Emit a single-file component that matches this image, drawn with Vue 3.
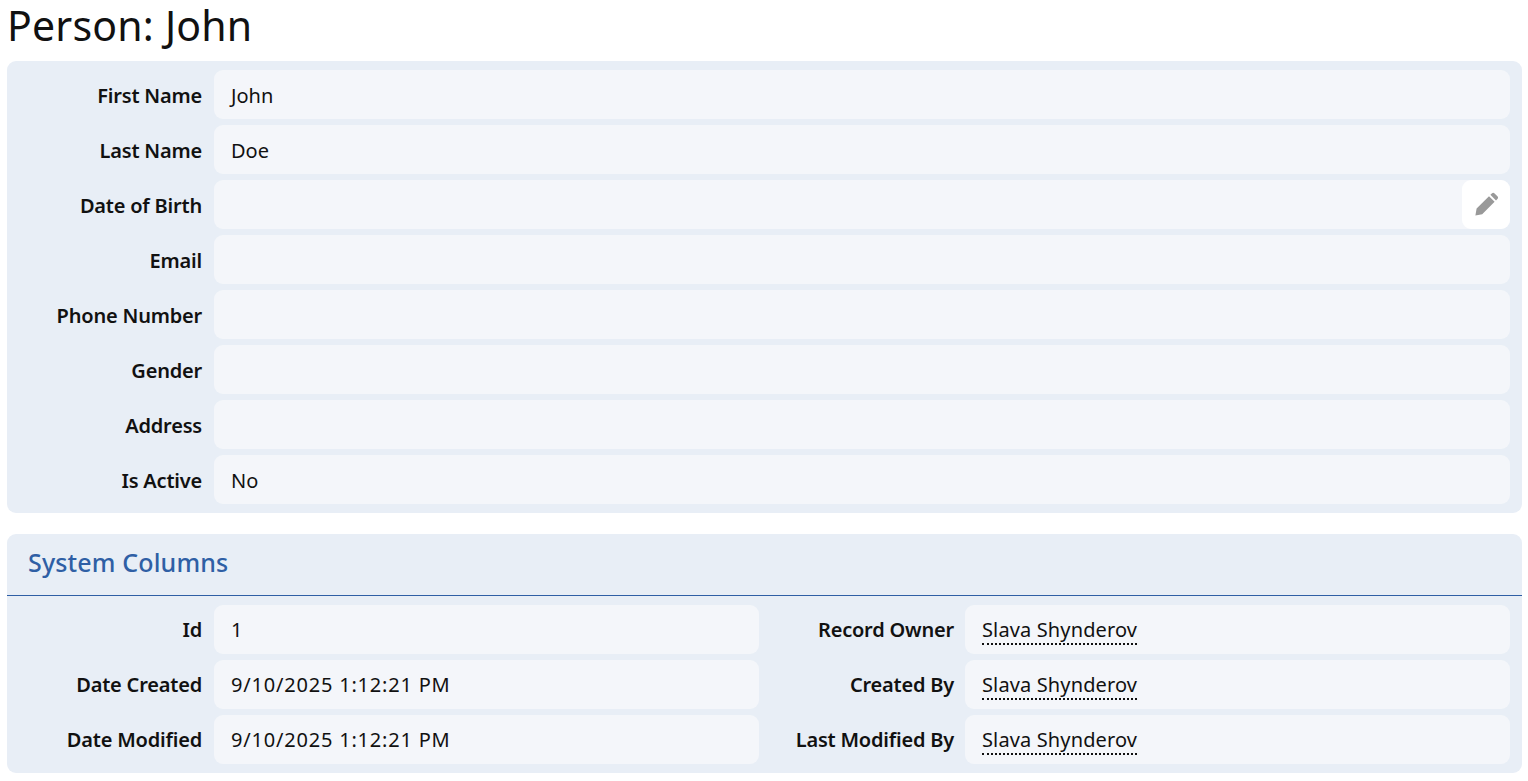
<script setup>
const mainRows = [
  { label: 'First Name', value: 'John' },
  { label: 'Last Name', value: 'Doe' },
  { label: 'Date of Birth', value: '', edit: true },
  { label: 'Email', value: '' },
  { label: 'Phone Number', value: '' },
  { label: 'Gender', value: '' },
  { label: 'Address', value: '' },
  { label: 'Is Active', value: 'No' },
]
const systemRows = [
  { label: 'Id', value: '1', owner: 'Record Owner' },
  { label: 'Date Created', value: '9/10/2025 1:12:21 PM', owner: 'Created By' },
  { label: 'Date Modified', value: '9/10/2025 1:12:21 PM', owner: 'Last Modified By' },
]
</script>

<template>
  <div class="page">
    <h1 class="title">Person: John</h1>
    <section class="panel main">
      <div v-for="row in mainRows" :key="row.label" class="row">
        <div class="label">{{ row.label }}</div>
        <div class="value">
          <span>{{ row.value }}</span>
          <button v-if="row.edit" class="edit" type="button" aria-label="Edit">
            <svg width="24" height="24" viewBox="0 0 24 24">
              <path fill="#999" d="M1.4 23.4l1.2-6.8L15 4.2l5.6 5.6L8.2 22.2zM16.4 2.8l1.4-1.4a2 2 0 0 1 2.8 0l2.8 2.8a2 2 0 0 1 0 2.8L22 8.4z"/>
            </svg>
          </button>
        </div>
      </div>
    </section>
    <section class="panel system">
      <h2 class="heading">System Columns</h2>
      <div class="sys-grid">
        <template v-for="row in systemRows" :key="row.label">
          <div class="label">{{ row.label }}</div>
          <div class="value"><span class="num">{{ row.value }}</span></div>
          <div class="label">{{ row.owner }}</div>
          <div class="value"><span class="link">Slava Shynderov</span></div>
        </template>
      </div>
    </section>
  </div>
</template>

<style>
html, body { background: #fff; }
</style>

<style scoped>
.page {
  padding: 0 6px 0 7px;
  font-family: "Noto Sans", Roboto, sans-serif;
  font-size: 20px;
  color: #111;
}
.title {
  margin: 0;
  height: 61px;
  font-size: 41px;
  font-weight: 400;
  line-height: 50px;
  letter-spacing: 0.2px;
  color: #111;
}
.panel {
  background: #e8eef6;
  border-radius: 9px;
}
.main {
  padding: 9px 12px 9px 0;
  display: flex;
  flex-direction: column;
  gap: 6px;
}
.row {
  display: grid;
  grid-template-columns: 207px 1fr;
}
.label {
  padding-right: 12px;
  text-align: right;
  font-weight: 600;
  letter-spacing: -0.2px;
  line-height: 50px;
  height: 49px;
  white-space: nowrap;
}
.value {
  position: relative;
  height: 49px;
  line-height: 50px;
  padding-left: 17px;
  background: #f4f6fa;
  border-radius: 9px;
}
.main .label,
.main .value {
  line-height: 51px;
}
.edit {
  position: absolute;
  top: 0;
  right: 0;
  width: 48px;
  height: 49px;
  padding: 0 0 2px;
  display: flex;
  align-items: center;
  justify-content: center;
  background: #fff;
  border: 0;
  border-radius: 9px;
}
.system {
  margin-top: 21px;
}
.heading {
  margin: 0;
  height: 61px;
  padding-left: 21px;
  font-size: 25px;
  font-weight: 500;
  line-height: 57px;
  letter-spacing: 0.15px;
  color: #2f5fa5;
  border-bottom: 1px solid #2f5fa5;
}
.sys-grid {
  display: grid;
  grid-template-columns: 207px 1fr 206px 1fr;
  row-gap: 6px;
  padding: 9px 12px 9px 0;
}
.sys-grid .label:nth-child(4n + 3) {
  padding-right: 11px;
}
.num {
  letter-spacing: 0.8px;
}
.link {
  display: inline-block;
  height: 38px;
  line-height: 50px;
  letter-spacing: 0.13px;
  border-bottom: 2px dotted #111;
}
</style>
